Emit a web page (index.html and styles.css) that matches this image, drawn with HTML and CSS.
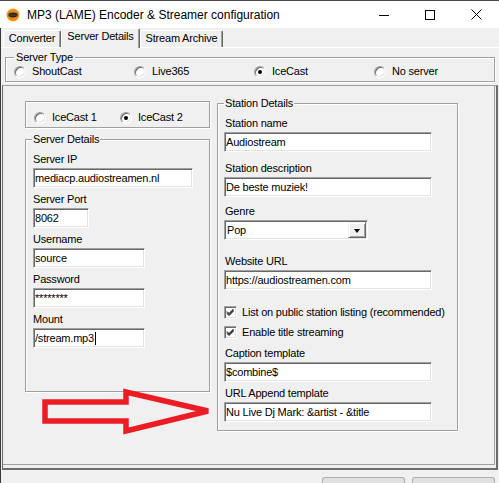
FILE: index.html
```html
<!DOCTYPE html>
<html>
<head>
<meta charset="utf-8">
<title>MP3 (LAME) Encoder &amp; Streamer configuration</title>
<link rel="stylesheet" href="styles.css">
</head>
<body>
<header class="titlebar">
  <svg class="app-icon" viewBox="0 0 14 14" width="14" height="14">
    <circle cx="7" cy="7" r="6.5" fill="#f49a22"/>
    <circle cx="7" cy="7" r="5.3" fill="#e8891a"/>
    <ellipse cx="7" cy="7" rx="4.6" ry="2.4" fill="#2b2622"/>
    <path d="M3.5 7h7" stroke="#6a5a48" stroke-width="0.6"/>
  </svg>
  <span class="title">MP3 (LAME) Encoder &amp; Streamer configuration</span>
  <div class="controls">
    <span class="ctl"><svg width="10" height="10" viewBox="0 0 10 10"><path d="M0 5.5H10" stroke="#000" stroke-width="1"/></svg></span>
    <span class="ctl"><svg width="10" height="10" viewBox="0 0 10 10"><rect x="0.5" y="0.5" width="9" height="9" fill="none" stroke="#000" stroke-width="1"/></svg></span>
    <span class="ctl"><svg width="11" height="11" viewBox="0 0 11 11"><path d="M0.5 0.5L10.5 10.5M10.5 0.5L0.5 10.5" stroke="#000" stroke-width="1"/></svg></span>
  </div>
</header>

<div class="main">
  <nav class="tabs">
    <span class="tab tab-converter">Converter</span>
    <span class="tab tab-active">Server Details</span>
    <span class="tab tab-archive">Stream Archive</span>
  </nav>

  <div class="page">
    <div class="group group-type">
      <span class="group-title">Server Type</span>
      <div class="type-row">
        <span class="opt"><span class="radio"></span>ShoutCast</span>
        <span class="opt"><span class="radio"></span>Live365</span>
        <span class="opt"><span class="radio on"></span>IceCast</span>
        <span class="opt"><span class="radio"></span>No server</span>
      </div>
    </div>

    <div class="frame">
      <div class="frame-inner">
        <div class="col-left">
          <div class="group group-version">
            <div class="version-row">
              <span class="opt opt-ice1"><span class="radio"></span>IceCast 1</span>
              <span class="opt"><span class="radio on"></span>IceCast 2</span>
            </div>
          </div>

          <div class="group group-server">
            <span class="group-title">Server Details</span>
            <div class="field field-first">
              <div class="label">Server IP</div>
              <div class="input w-ip">mediacp.audiostreamen.nl</div>
            </div>
            <div class="field">
              <div class="label">Server Port</div>
              <div class="input w-port">8062</div>
            </div>
            <div class="field">
              <div class="label">Username</div>
              <div class="input w-short">source</div>
            </div>
            <div class="field">
              <div class="label">Password</div>
              <div class="input w-short">********</div>
            </div>
            <div class="field">
              <div class="label">Mount</div>
              <div class="input w-short">/stream.mp3<span class="caret"></span></div>
            </div>
          </div>
        </div>

        <div class="group group-station">
          <span class="group-title">Station Details</span>
          <div class="field field-first">
            <div class="label">Station name</div>
            <div class="input w-wide">Audiostream</div>
          </div>
          <div class="field gap-10">
            <div class="label">Station description</div>
            <div class="input w-wide">De beste muziek!</div>
          </div>
          <div class="field gap-8">
            <div class="label">Genre</div>
            <div class="select w-genre">
              <span class="select-text">Pop</span>
              <span class="drop-btn"><span class="tri"></span></span>
            </div>
          </div>
          <div class="field gap-15">
            <div class="label">Website URL</div>
            <div class="input w-wide">https://audiostreamen.com</div>
          </div>
          <div class="check-row gap-16">
            <span class="checkbox"><svg width="9" height="9" viewBox="0 0 9 9"><path d="M1 3.5L3 5.5L7.5 1M1 4.5L3 6.5L7.5 2M1 5.5L3 7.5L7.5 3" stroke="#000" stroke-width="1" fill="none"/></svg></span>
            <span>List on public station listing (recommended)</span>
          </div>
          <div class="check-row gap-7">
            <span class="checkbox"><svg width="9" height="9" viewBox="0 0 9 9"><path d="M1 3.5L3 5.5L7.5 1M1 4.5L3 6.5L7.5 2M1 5.5L3 7.5L7.5 3" stroke="#000" stroke-width="1" fill="none"/></svg></span>
            <span>Enable title streaming</span>
          </div>
          <div class="field gap-8">
            <div class="label">Caption template</div>
            <div class="input w-wide">$combine$</div>
          </div>
          <div class="field gap-5">
            <div class="label">URL Append template</div>
            <div class="input w-wide">Nu Live Dj Mark: &amp;artist - &amp;title</div>
          </div>
        </div>
      </div>
    </div>

    <div class="footer">
      <span class="btn"></span>
      <span class="btn"></span>
    </div>
  </div>
</div>

<svg class="annotation" viewBox="0 0 499 483" width="499" height="483">
  <polygon points="45,402 126,402 126,392 208,411 126,431 126,421 45,421" fill="none" stroke="#ed1c24" stroke-width="5.5" stroke-linejoin="miter"/>
</svg>
</body>
</html>
```

FILE: styles.css
```css
* {
  box-sizing: border-box;
}

html, body {
  margin: 0;
  padding: 0;
}

body {
  width: 499px;
  height: 483px;
  overflow: hidden;
  position: relative;
  background: #f0f0f0;
  color: #000;
  font-family: "Liberation Sans", Arial, sans-serif;
  font-size: 11px;
}

/* ---------- title bar ---------- */
.titlebar {
  height: 28px;
  background: #fff;
  border-top: 1px solid #4a4a4a;
  display: flex;
  align-items: center;
}

.app-icon {
  flex: none;
  margin-left: 6px;
}

.title {
  flex: 1;
  margin-left: 7px;
  font-size: 12px;
  white-space: nowrap;
}

.controls {
  display: flex;
  height: 27px;
}

.ctl {
  width: 46px;
  display: flex;
  align-items: center;
  justify-content: center;
}

.ctl svg {
  display: block;
}

/* ---------- main dialog ---------- */
.main {
  height: 455px;
  border-left: 1px solid #3a3a3a;
  letter-spacing: -0.2px;
}

.tabs {
  display: flex;
  align-items: flex-end;
  height: 19px;
  padding-left: 2px;
}

.tab {
  height: 17px;
  background: #f0f0f0;
  border-top: 1px solid #fff;
  border-left: 1px solid #fff;
  border-right: 1px solid #696969;
  border-radius: 2px 2px 0 0;
  box-shadow: inset -1px 0 0 #a0a0a0;
  text-align: center;
  line-height: 15px;
  white-space: nowrap;
}

.tab-converter { width: 58px; }
.tab-archive { width: 83px; }

.tab-active {
  width: 79px;
  height: 20px;
  margin-bottom: -1px;
  line-height: 15px;
  position: relative;
  z-index: 1;
}

.page {
  border-top: 1px solid #fff;
}

/* ---------- group boxes ---------- */
.group {
  border: 1px solid #a0a0a0;
  box-shadow: inset 1px 1px 0 #fff, 1px 1px 0 #fff;
}

.group-title {
  display: table;
  margin: -7px 0 0 0;
  padding: 0 1px;
  line-height: 13px;
  background: #f0f0f0;
  white-space: nowrap;
}

.group-type {
  margin: 9px 4px 0;
  padding: 0 0 3px 8px;
}

.group-type .group-title {
  padding: 0 2px;
}

.type-row {
  display: grid;
  grid-template-columns: repeat(4, 120px);
  margin-top: 1px;
}

.opt {
  display: flex;
  align-items: center;
  gap: 6px;
  height: 13px;
  line-height: 13px;
  white-space: nowrap;
}

.radio {
  flex: none;
  width: 12px;
  height: 12px;
  border-radius: 50%;
  background: #fff;
  border: 1px solid;
  border-color: #a0a0a0 #fff #fff #a0a0a0;
  box-shadow: inset 1px 1px 0 #696969, inset -1px -1px 0 #e3e3e3;
  display: flex;
  align-items: center;
  justify-content: center;
}

.radio.on::after {
  content: "";
  width: 4px;
  height: 4px;
  border-radius: 50%;
  background: #000;
}

/* ---------- inner frame ---------- */
.frame {
  height: 385px;
  margin: 3px 1px 0 1px;
  border-left: 1px solid #696969;
  border-top: 1px solid #a0a0a0;
  border-right: 2px solid #6d6d6d;
  border-bottom: 2px solid #6d6d6d;
}

.frame-inner {
  height: 379px;
  margin: 0 1px 3px 0;
  border-right: 1px solid #a0a0a0;
  border-bottom: 1px solid #a0a0a0;
  padding: 15px 0 0 22px;
  display: flex;
  align-items: flex-start;
  gap: 7px;
}

.col-left {
  width: 185px;
}

.group-version {
  padding: 9px 0 3px 8px;
}

.version-row {
  display: flex;
}

.opt-ice1 {
  width: 86px;
}

.group-server {
  margin-top: 11px;
  padding: 0 0 43px 7px;
}

.group-server .group-title {
  margin-left: -1px;
}

.group-station {
  width: 241px;
  margin-top: 2px;
  padding: 0 0 8px 6px;
}

.group-station .label {
  padding-left: 1px;
}

/* ---------- fields ---------- */
.field {
  margin-top: 5px;
}

.field-first {
  margin-top: 7px;
}

.gap-5 { margin-top: 5px; }
.gap-7 { margin-top: 7px; }
.gap-8 { margin-top: 8px; }
.gap-10 { margin-top: 10px; }
.gap-15 { margin-top: 15px; }
.gap-16 { margin-top: 16px; }

.label {
  line-height: 13px;
  margin-bottom: 2px;
  white-space: nowrap;
}

.input {
  height: 20px;
  background: #fff;
  border: 1px solid;
  border-color: #a0a0a0 #fff #fff #a0a0a0;
  box-shadow: inset 1px 1px 0 #696969, inset -1px -1px 0 #e3e3e3;
  padding-left: 1px;
  line-height: 18px;
  white-space: nowrap;
  overflow: hidden;
  display: flex;
  align-items: center;
}

.w-ip { width: 160px; }
.w-port { width: 56px; }
.w-short { width: 112px; }
.w-wide { width: 208px; }
.w-genre { width: 144px; }

.caret {
  display: inline-block;
  width: 1px;
  height: 13px;
  margin-left: 1px;
  background: #000;
}

.select {
  height: 20px;
  background: #fff;
  border: 1px solid;
  border-color: #a0a0a0 #fff #fff #a0a0a0;
  box-shadow: inset 1px 1px 0 #696969, inset -1px -1px 0 #e3e3e3;
  padding: 1px;
  display: flex;
}

.select-text {
  flex: 1;
  padding-left: 1px;
  line-height: 16px;
}

.drop-btn {
  width: 18px;
  background: #f0f0f0;
  border: 1px solid;
  border-color: #f0f0f0 #696969 #696969 #f0f0f0;
  box-shadow: inset 1px 1px 0 #fff, inset -1px -1px 0 #a0a0a0;
  display: flex;
  align-items: center;
  justify-content: center;
}

.tri {
  width: 0;
  height: 0;
  border-left: 3.5px solid transparent;
  border-right: 3.5px solid transparent;
  border-top: 4px solid #000;
  margin-top: 1px;
}

.check-row {
  display: flex;
  align-items: center;
  gap: 5px;
  height: 13px;
  line-height: 13px;
  white-space: nowrap;
}

.checkbox {
  flex: none;
  width: 13px;
  height: 13px;
  background: #fff;
  border: 1px solid;
  border-color: #a0a0a0 #fff #fff #a0a0a0;
  box-shadow: inset 1px 1px 0 #696969, inset -1px -1px 0 #e3e3e3;
  display: flex;
  align-items: center;
  justify-content: center;
}

.checkbox svg {
  display: block;
}

/* ---------- footer ---------- */
.footer {
  height: 13px;
  display: flex;
  justify-content: flex-end;
  gap: 7px;
  padding: 7px 4px 0 0;
}

.btn {
  width: 83px;
  height: 8px;
  background: #e1e1e1;
  border: 1px solid #adadad;
  border-bottom: 0;
  border-radius: 3px 3px 0 0;
}

/* ---------- annotation arrow ---------- */
.annotation {
  position: absolute;
  left: 0;
  top: 0;
  pointer-events: none;
}
```
